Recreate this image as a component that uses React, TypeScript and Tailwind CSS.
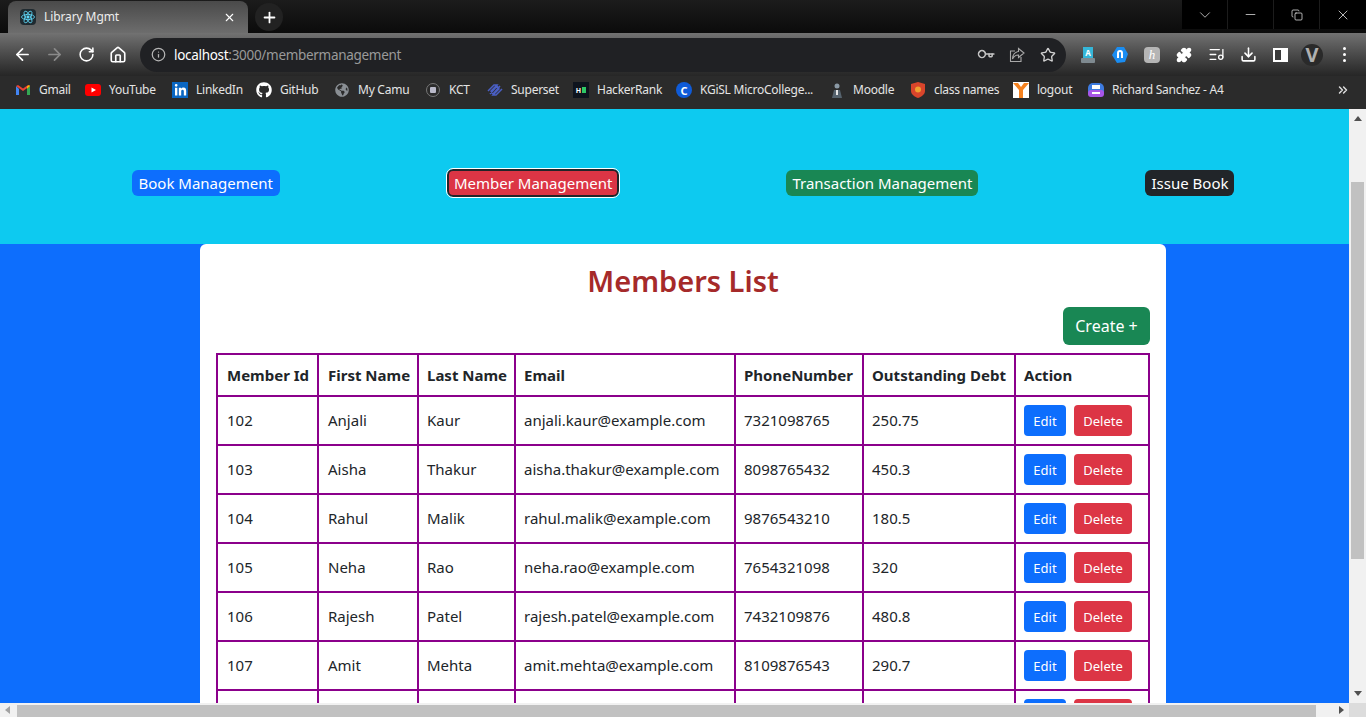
import { ArrowLeft, ArrowRight, RotateCw, Home, Info, Key, Star, Puzzle, ListMusic, Download, ChevronDown, Minus, X, Plus, Copy, ChevronsRight } from "lucide-react";
import { FaGithub, FaGlobeAmericas, FaLinkedinIn } from "react-icons/fa";

const members = [
  { id: 102, first: "Anjali", last: "Kaur", email: "anjali.kaur@example.com", phone: "7321098765", debt: "250.75" },
  { id: 103, first: "Aisha", last: "Thakur", email: "aisha.thakur@example.com", phone: "8098765432", debt: "450.3" },
  { id: 104, first: "Rahul", last: "Malik", email: "rahul.malik@example.com", phone: "9876543210", debt: "180.5" },
  { id: 105, first: "Neha", last: "Rao", email: "neha.rao@example.com", phone: "7654321098", debt: "320" },
  { id: 106, first: "Rajesh", last: "Patel", email: "rajesh.patel@example.com", phone: "7432109876", debt: "480.8" },
  { id: 107, first: "Amit", last: "Mehta", email: "amit.mehta@example.com", phone: "8109876543", debt: "290.7" },
];

const Gmail = () => (
  <svg viewBox="0 0 16 16" className="h-4 w-4">
    <path d="M1 4v9h3V7z" fill="#4285f4" />
    <path d="M15 4v9h-3V7z" fill="#34a853" />
    <path d="M1 4l7 5 7-5-2-1-5 3.5L3 3z" fill="#ea4335" />
    <path d="M12 7l3-3-1-1-2 1.500z" fill="#fbbc04" />
  </svg>
);

const YouTube = () => (
  <svg viewBox="0 0 16 16" className="h-4 w-4">
    <rect x="0" y="2" width="16" height="12" rx="3" fill="#f00" />
    <path d="M6.5 5.5v5L11 8z" fill="#fff" />
  </svg>
);

function Bookmark({ icon, label, className }: { icon: React.ReactNode; label: string; className: string }) {
  return (
    <div className={`flex items-center gap-2 shrink-0 ${className}`}>
      <span className="flex h-4 w-4 items-center justify-center">{icon}</span>
      <span className="whitespace-nowrap text-[12px] tracking-[-0.25px] text-[#e4e4e4]">{label}</span>
    </div>
  );
}

export default function App() {
  return (
    <div className="flex h-screen w-full flex-col overflow-hidden bg-[#0d6efd] font-['Noto_Sans','Open_Sans',sans-serif]">
      {/* Tab strip */}
      <div className="flex h-[33px] shrink-0 bg-linear-to-b from-[#1c1c1c] to-[#0b0b0b]">
        <div className="ml-2 mt-[1px] flex h-[32px] w-[240px] items-center rounded-t-lg bg-linear-to-b from-[#4a4a4a] to-[#6d6d6d] pl-3 pr-3">
          <svg viewBox="0 0 16 16" className="h-4 w-4 rounded-sm bg-[#1f2a30]" fill="none" stroke="#61dafb" strokeWidth="0.8">
            <circle cx="8" cy="8" r="1.2" fill="#61dafb" />
            <ellipse cx="8" cy="8" rx="6.5" ry="2.6" />
            <ellipse cx="8" cy="8" rx="6.5" ry="2.6" transform="rotate(60 8 8)" />
            <ellipse cx="8" cy="8" rx="6.5" ry="2.6" transform="rotate(120 8 8)" />
          </svg>
          <span className="ml-2 flex-1 text-[12px] tracking-[-0.1px] text-[#ececec]">Library Mgmt</span>
          <X size={13} strokeWidth={2} className="text-white" />
        </div>
        <div className="ml-[7px] mt-[3px] flex h-7 w-7 items-center justify-center rounded-full bg-[#222]">
          <Plus size={17} strokeWidth={2.5} className="text-white" />
        </div>
        <div className="ml-auto flex h-[29px] items-center bg-black text-[#e6e6e6]">
          <span className="flex h-full w-[46px] items-center justify-center border-r border-[#1c1c1c]"><ChevronDown size={18} strokeWidth={1} /></span>
          <span className="flex h-full w-[46px] items-center justify-center border-r border-[#1c1c1c]"><Minus size={15} strokeWidth={1.2} /></span>
          <span className="flex h-full w-[46px] items-center justify-center border-r border-[#1c1c1c]"><Copy size={12} strokeWidth={1.5} /></span>
          <span className="flex h-full w-[46px] items-center justify-center"><X size={16} strokeWidth={1.2} /></span>
        </div>
      </div>

      {/* Toolbar */}
      <div className="flex h-[43px] shrink-0 items-center bg-linear-to-b from-[#727272] to-[#262626] text-white">
        <ArrowLeft size={19} strokeWidth={2.2} className="ml-[13px]" />
        <ArrowRight size={19} strokeWidth={2.2} className="ml-[13px] text-[#8a8a8a]" />
        <RotateCw size={17} strokeWidth={2.2} className="ml-[14px]" />
        <Home size={18} strokeWidth={2.2} className="ml-[14px]" />
        <div className="ml-[13px] flex h-[34px] w-[926px] items-center rounded-full bg-[#202124] pl-[11px] pr-[10px]">
          <Info size={15} className="text-[#b5b5b5]" />
          <span className="ml-[8px] flex-1 pt-[1px] text-[13.5px] tracking-[-0.3px] text-[#9a9a9a]"><span className="text-white">localhost</span>:3000/membermanagement</span>
          <Key size={15} strokeWidth={2.5} className="mr-[16px] rotate-45 text-[#c4c4c4]" />
          <svg viewBox="0 0 16 16" className="mr-[15px] h-4 w-4 text-[#a8a8a8]" fill="none" stroke="currentColor" strokeWidth="1.1">
            <path d="M6 4H1.500v10.500h10.500V10" />
            <path d="M9.500 1.500L15 6l-5.500 4.500V8C7 8 5 9 3.500 12c0-4 2.500-7 6-7.500z" />
          </svg>
          <Star size={16} strokeWidth={2} className="text-[#d0d0d0]" />
        </div>
        <svg viewBox="0 0 16 16" className="ml-[14px] h-4 w-4">
          <rect x="3" y="0" width="10" height="11" fill="#35b6d8" />
          <text x="8" y="8.500" textAnchor="middle" fontSize="8" fontWeight="700" fill="#fff">A</text>
          <rect x="1" y="11" width="14" height="5" rx="1" fill="#7f8a90" />
        </svg>
        <svg viewBox="0 0 16 16" className="ml-[16px] h-4 w-4"><path d="M5 0h7l4 7-3 8-8 1-5-8z" fill="#1a8df2" /><path d="M5 11V6a3 3 0 016 0v5h-2V6a1 1 0 00-2 0v5z" fill="#fff" /></svg>
        <div className="ml-[16px] flex h-4 w-4 items-center justify-center rounded-sm bg-[#b5b5b5] font-['Liberation_Serif',serif] text-[13px] italic leading-none text-white">h</div>
        <Puzzle size={16} fill="#fff" className="ml-[16px]" />
        <ListMusic size={17} strokeWidth={1.8} className="ml-[16px]" />
        <Download size={17} strokeWidth={2.2} className="ml-[15px]" />
        <div className="ml-[16px] flex h-[14px] w-[15px] justify-start border-2 border-white bg-white"><div className="h-full w-[6px] bg-[#3a3a3a]" /></div>
        <div className="ml-[13px] flex h-[22px] w-[22px] items-center justify-center rounded-full bg-[#2a2a2a] text-[20px] font-bold leading-none text-[#b0b0b0]">V</div>
        <div className="ml-[20px] flex flex-col gap-[3px]">
          <span className="h-[3px] w-[3px] rounded-full bg-white" />
          <span className="h-[3px] w-[3px] rounded-full bg-white" />
          <span className="h-[3px] w-[3px] rounded-full bg-white" />
        </div>
      </div>

      {/* Bookmarks */}
      <div className="flex h-[33px] shrink-0 items-center bg-[#2b2b2b] pb-[5px] pl-[15px]">
        <Bookmark className="w-[70px]" label="Gmail" icon={<Gmail />} />
        <Bookmark className="w-[87px]" label="YouTube" icon={<YouTube />} />
        <Bookmark className="w-[84px]" label="LinkedIn" icon={<span className="flex h-4 w-4 items-center justify-center bg-[#0a66c2]"><FaLinkedinIn size={13} className="text-white" /></span>} />
        <Bookmark className="w-[78px]" label="GitHub" icon={<FaGithub size={16} className="text-white" />} />
        <Bookmark className="w-[91px]" label="My Camu" icon={<FaGlobeAmericas size={14} className="text-[#8a8f94]" />} />
        <Bookmark className="w-[62px]" label="KCT" icon={<span className="flex h-[14px] w-[14px] items-center justify-center rounded-full border border-[#777]"><span className="h-[6px] w-[6px] rounded-[1px] bg-[#b9b9c9]" /></span>} />
        <Bookmark className="w-[86px]" label="Superset" icon={<svg viewBox="0 0 16 16" className="h-4 w-4" fill="none" stroke="#4a5fc4" strokeWidth="1.5"><path d="M1 9l6-6h3L4 9l2 3 7-8M15 7l-6 6H6l6-6-2-3-7 8" /></svg>} />
        <Bookmark className="w-[103px]" label="HackerRank" icon={<span className="flex h-4 w-4 items-center justify-center gap-[1px] bg-[#0e141e]"><span className="text-[7px] font-bold leading-none text-white">H</span><span className="h-[6px] w-1 bg-[#2ec866]" /></span>} />
        <Bookmark className="w-[153px]" label="KGiSL MicroCollege..." icon={<span className="flex h-4 w-4 items-center justify-center rounded-full bg-[#0f5bd8] text-[11px] font-bold leading-none text-white">C</span>} />
        <Bookmark className="w-[81px]" label="Moodle" icon={<svg viewBox="0 0 16 16" className="h-4 w-4"><circle cx="8" cy="4" r="2.5" fill="#8a99a5" /><path d="M3 16l2-8h6l2 8z" fill="#56636e" /><path d="M7 8h2v5H7z" fill="#e6e6e6" /></svg>} />
        <Bookmark className="w-[103px]" label="class names" icon={<svg viewBox="0 0 16 16" className="h-4 w-4"><path d="M8 0l7 2v7c0 3-3 5.5-7 7-4-1.5-7-4-7-7V2z" fill="#d9452b" /><circle cx="8" cy="7.5" r="3" fill="#f0a030" /></svg>} />
        <Bookmark className="w-[75px]" label="logout" icon={<svg viewBox="0 0 16 16" className="h-4 w-4"><path d="M0 0h16v16H0z" fill="#fff" /><path d="M0 1h5l3 4 3-4h5L10 8v8H6V8z" fill="#f58220" /></svg>} />
        <Bookmark className="w-[140px]" label="Richard Sanchez - A4" icon={<svg viewBox="0 0 16 16" className="h-4 w-4"><rect x="0" y="1" width="16" height="14" rx="5" fill="#3d7be0" /><rect x="0" y="8" width="16" height="7" rx="3" fill="#a855e8" /><rect x="4" y="3" width="8" height="4" fill="#fff" /><rect x="4" y="10" width="8" height="2" fill="#fff" /></svg>} />
        <ChevronsRight size={14} strokeWidth={2.5} className="ml-auto mr-[16px] text-[#dedede]" />
      </div>

      {/* Viewport with scrollbars */}
      <div className="flex min-h-0 flex-1">
        <div className="flex min-w-0 flex-1 flex-col">
          <div className="min-h-0 flex-1 overflow-hidden">
            <div className="w-[1366px]">
              {/* Nav band */}
              <div className="flex h-[135px] items-center justify-around bg-[#0dcaf0] px-12 pt-[13px]">
                <button className="h-[26px] rounded-[6px] bg-[#0d6efd] px-[7px] text-[15px] text-white">Book Management</button>
                <button className="h-[28px] rounded-[6px] border-2 border-[#212529] bg-[#dc3545] px-[5px] text-[15px] text-white outline-1 outline-white">Member Management</button>
                <button className="h-[26px] rounded-[6px] bg-[#198754] px-[6px] text-[15px] text-white">Transaction Management</button>
                <button className="h-[26px] rounded-[6px] bg-[#212529] px-[6px] text-[15px] text-white">Issue Book</button>
              </div>

              {/* Card */}
              <div className="mx-auto w-[966px] rounded-t-[6px] bg-white px-4 pt-[14px] text-[#212529]">
                <h1 className="text-center text-[29px] font-semibold leading-[46px] text-[#a52a2a]">Members List</h1>
                <div className="mt-[3px] flex justify-end">
                  <button className="h-[38px] w-[87px] rounded-[6px] bg-[#198754] text-[16px] text-white">Create +</button>
                </div>
                <table className="mt-2 w-[934px] table-fixed border-collapse border-2 border-[#8b008b] text-[15px]">
                  <colgroup>
                    <col className="w-[101px]" />
                    <col className="w-[100px]" />
                    <col className="w-[97px]" />
                    <col className="w-[220px]" />
                    <col className="w-[128px]" />
                    <col className="w-[152px]" />
                    <col className="w-[134px]" />
                  </colgroup>
                  <thead>
                    <tr className="h-[42px] font-bold">
                      {["Member Id", "First Name", "Last Name", "Email", "PhoneNumber", "Outstanding Debt", "Action"].map((h) => (
                        <th key={h} className="border-2 border-[#8b008b] pl-2 text-left whitespace-nowrap first:pl-[9px] [&:nth-child(2)]:pl-[9px]">{h}</th>
                      ))}
                    </tr>
                  </thead>
                  <tbody>
                    {members.map((m) => (
                      <tr key={m.id} className="h-[49px]">
                        <td className="border-2 border-[#8b008b] pl-[9px]">{m.id}</td>
                        <td className="border-2 border-[#8b008b] pl-[9px]">{m.first}</td>
                        <td className="border-2 border-[#8b008b] pl-2">{m.last}</td>
                        <td className="border-2 border-[#8b008b] pl-2">{m.email}</td>
                        <td className="border-2 border-[#8b008b] pl-2">{m.phone}</td>
                        <td className="border-2 border-[#8b008b] pl-2">{m.debt}</td>
                        <td className="border-2 border-[#8b008b] pl-2">
                          <div className="flex gap-2">
                            <button className="h-[31px] w-[42px] rounded-[4px] bg-[#0d6efd] pt-[2px] text-[13px] text-white">Edit</button>
                            <button className="h-[31px] w-[58px] rounded-[4px] bg-[#dc3545] pt-[2px] text-[13px] text-white">Delete</button>
                          </div>
                        </td>
                      </tr>
                    ))}
                    <tr className="h-[49px]">
                      <td className="border-2 border-[#8b008b]" />
                      <td className="border-2 border-[#8b008b]" />
                      <td className="border-2 border-[#8b008b]" />
                      <td className="border-2 border-[#8b008b]" />
                      <td className="border-2 border-[#8b008b]" />
                      <td className="border-2 border-[#8b008b]" />
                      <td className="border-2 border-[#8b008b] pl-2 pt-2 align-top">
                        <div className="flex gap-2">
                          <span className="h-[31px] w-[42px] rounded-[4px] bg-[#0d6efd]" />
                          <span className="h-[31px] w-[58px] rounded-[4px] bg-[#dc3545]" />
                        </div>
                      </td>
                    </tr>
                  </tbody>
                </table>
              </div>
            </div>
          </div>

          {/* Horizontal scrollbar */}
          <div className="flex h-[14px] shrink-0 items-center bg-[#f1f1f1]">
            <span className="ml-[5px] h-0 w-0 border-y-[4px] border-r-[5px] border-y-transparent border-r-[#a3a3a3]" />
            <div className="ml-[7px] h-[12px] w-[1299px] self-end bg-[#c1c1c1]" />
            <span className="ml-[23px] h-0 w-0 border-y-[4px] border-l-[5px] border-y-transparent border-l-[#505050]" />
          </div>
        </div>

        {/* Vertical scrollbar */}
        <div className="flex w-[17px] shrink-0 flex-col items-center bg-[#f1f1f1]">
          <span className="mt-[7px] h-0 w-0 border-x-[4px] border-b-[5px] border-x-transparent border-b-[#505050]" />
          <div className="mt-[61px] h-[377px] w-[13px] bg-[#c1c1c1]" />
          <span className="mt-[132px] h-0 w-0 border-x-[4px] border-t-[5px] border-x-transparent border-t-[#505050]" />
          <div className="mt-auto h-[14px] w-full bg-[#dcdcdc]" />
        </div>
      </div>
    </div>
  );
}
